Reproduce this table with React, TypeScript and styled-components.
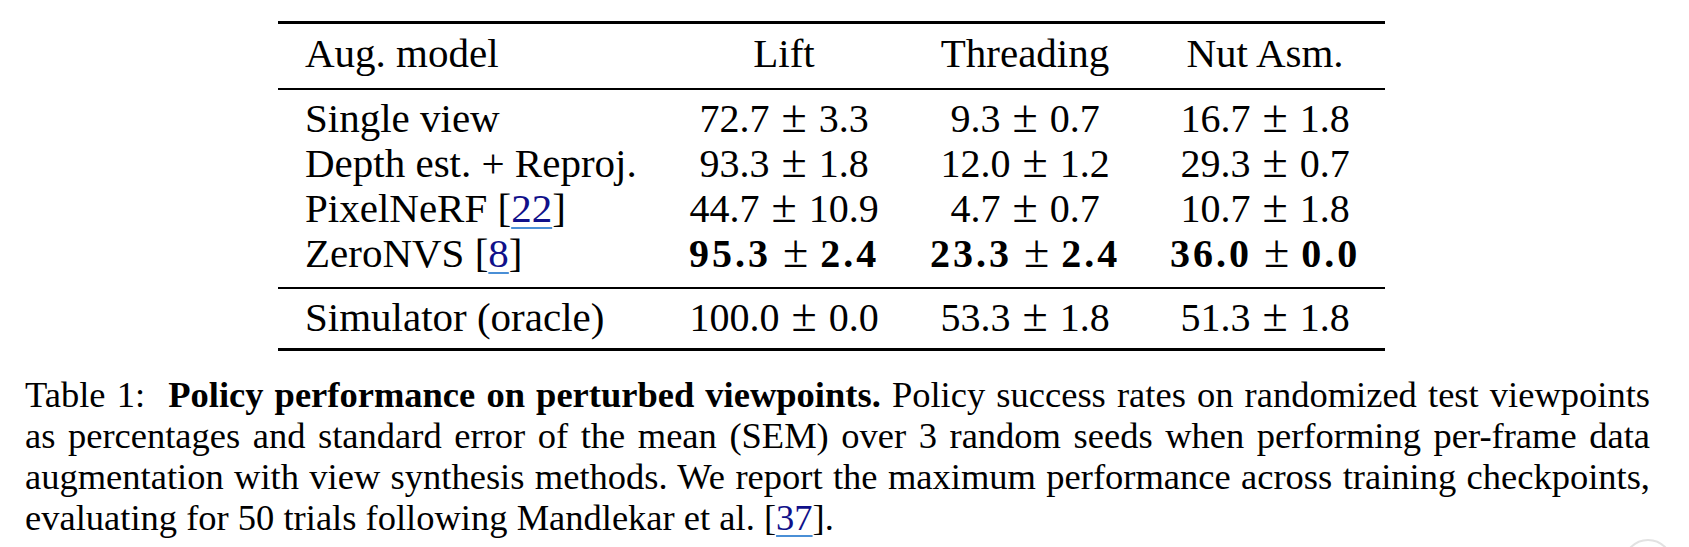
import React from 'react'
import styled, { createGlobalStyle } from 'styled-components'

type Cell = { v: string; e: string; bold?: boolean }
type RowData = { name: React.ReactNode; cells: Cell[] }

const GlobalStyle = createGlobalStyle`
  html, body {
    margin: 0;
    padding: 0;
    background: #fff;
  }
  body {
    font-family: "Liberation Serif", "Times New Roman", serif;
    color: #000;
    overflow: hidden;
  }
`

function Cite({ n }: { n: string }) {
  return (
    <>
      [<Link>{n}</Link>]
    </>
  )
}

const mainRows: RowData[] = [
  { name: 'Single view', cells: [{ v: '72.7', e: '3.3' }, { v: '9.3', e: '0.7' }, { v: '16.7', e: '1.8' }] },
  { name: 'Depth est. + Reproj.', cells: [{ v: '93.3', e: '1.8' }, { v: '12.0', e: '1.2' }, { v: '29.3', e: '0.7' }] },
  { name: <>PixelNeRF <Cite n="22" /></>, cells: [{ v: '44.7', e: '10.9' }, { v: '4.7', e: '0.7' }, { v: '10.7', e: '1.8' }] },
  {
    name: <>ZeroNVS <Cite n="8" /></>,
    cells: [
      { v: '95.3', e: '2.4', bold: true },
      { v: '23.3', e: '2.4', bold: true },
      { v: '36.0', e: '0.0', bold: true },
    ],
  },
]

const oracleRow: RowData = {
  name: 'Simulator (oracle)',
  cells: [{ v: '100.0', e: '0.0' }, { v: '53.3', e: '1.8' }, { v: '51.3', e: '1.8' }],
}

function Value({ c }: { c: Cell }) {
  return (
    <Num>
      <Digits $bold={c.bold}>{c.v}</Digits>
      <PM>±</PM>
      <Digits $bold={c.bold}>{c.e}</Digits>
    </Num>
  )
}

function TableRow({ row }: { row: RowData }) {
  return (
    <Row>
      <NameCell>{row.name}</NameCell>
      {row.cells.map((c, i) => (
        <ValueCell key={i}>
          <Value c={c} />
        </ValueCell>
      ))}
    </Row>
  )
}

function App() {
  return (
    <Page>
      <GlobalStyle />
      <TableBlock>
        <Rule $w={3} />
        <Section $top={7} $bottom={12}>
          <Row>
            <NameCell>Aug. model</NameCell>
            <ValueCell>Lift</ValueCell>
            <ValueCell>Threading</ValueCell>
            <ValueCell>Nut Asm.</ValueCell>
          </Row>
        </Section>
        <Rule $w={2} />
        <Section $top={6} $bottom={11}>
          {mainRows.map((r, i) => (
            <TableRow key={i} row={r} />
          ))}
        </Section>
        <Rule $w={2} />
        <Section $top={6} $bottom={8}>
          <TableRow row={oracleRow} />
        </Section>
        <Rule $w={3} />
      </TableBlock>

      <Caption>
        <CaptionLine>
          <Label>Table 1:</Label> <b>Policy performance on perturbed viewpoints.</b> Policy success rates on
          randomized test viewpoints
        </CaptionLine>
        <CaptionLine>
          as percentages and standard error of the mean (SEM) over 3 random seeds when performing per-frame data
        </CaptionLine>
        <CaptionLine>
          augmentation with view synthesis methods. We report the maximum performance across training checkpoints,
        </CaptionLine>
        <CaptionLine $last>
          evaluating for 50 trials following Mandlekar et al. <Cite n="37" />.
        </CaptionLine>
      </Caption>

      <FloatButton />
    </Page>
  )
}

const Page = styled.div`
  position: relative;
  width: 1689px;
  height: 547px;
  padding: 21px 0 0 25px;
  box-sizing: border-box;
  overflow: hidden;
`

const TableBlock = styled.div`
  width: 1107px;
  margin-left: 253px;
  display: flex;
  flex-direction: column;
`

const Rule = styled.div<{ $w: number }>`
  height: ${p => p.$w}px;
  background: #000;
`

const Section = styled.div<{ $top: number; $bottom: number }>`
  padding: ${p => p.$top}px 0 ${p => p.$bottom}px;
`

const Row = styled.div`
  display: grid;
  grid-template-columns: 385px 242px 240px 240px;
  height: 45px;
  line-height: 45px;
  font-size: 41px;
  white-space: nowrap;
`

const NameCell = styled.div`
  padding-left: 27px;
  text-align: left;
`

const ValueCell = styled.div`
  text-align: center;
`

const Num = styled.span`
  font-size: 40px;
`

const Digits = styled.span<{ $bold?: boolean }>`
  font-weight: ${p => (p.$bold ? 700 : 400)};
  letter-spacing: ${p => (p.$bold ? '3px' : '0')};
`

const PM = styled.span`
  font-size: 1.15em;
  line-height: 0;
  margin: 0 12px;
`

const Link = styled.span`
  color: #10108a;
  text-decoration: underline;
  text-decoration-color: #4a8fd6;
  text-decoration-thickness: 2px;
  text-underline-offset: 5px;
`

const Caption = styled.div`
  margin-top: 23px;
  width: 1625px;
  font-size: 36.5px;
  line-height: 41px;
`

const CaptionLine = styled.div<{ $last?: boolean }>`
  text-align: justify;
  text-align-last: ${p => (p.$last ? 'left' : 'justify')};
`

const Label = styled.span`
  margin-right: 12px;
`

const FloatButton = styled.div`
  position: absolute;
  left: 1623px;
  top: 539px;
  width: 50px;
  height: 50px;
  border-radius: 50%;
  border: 2px solid #e2e2e2;
  background: #fff;
  box-sizing: border-box;
`

export default App
